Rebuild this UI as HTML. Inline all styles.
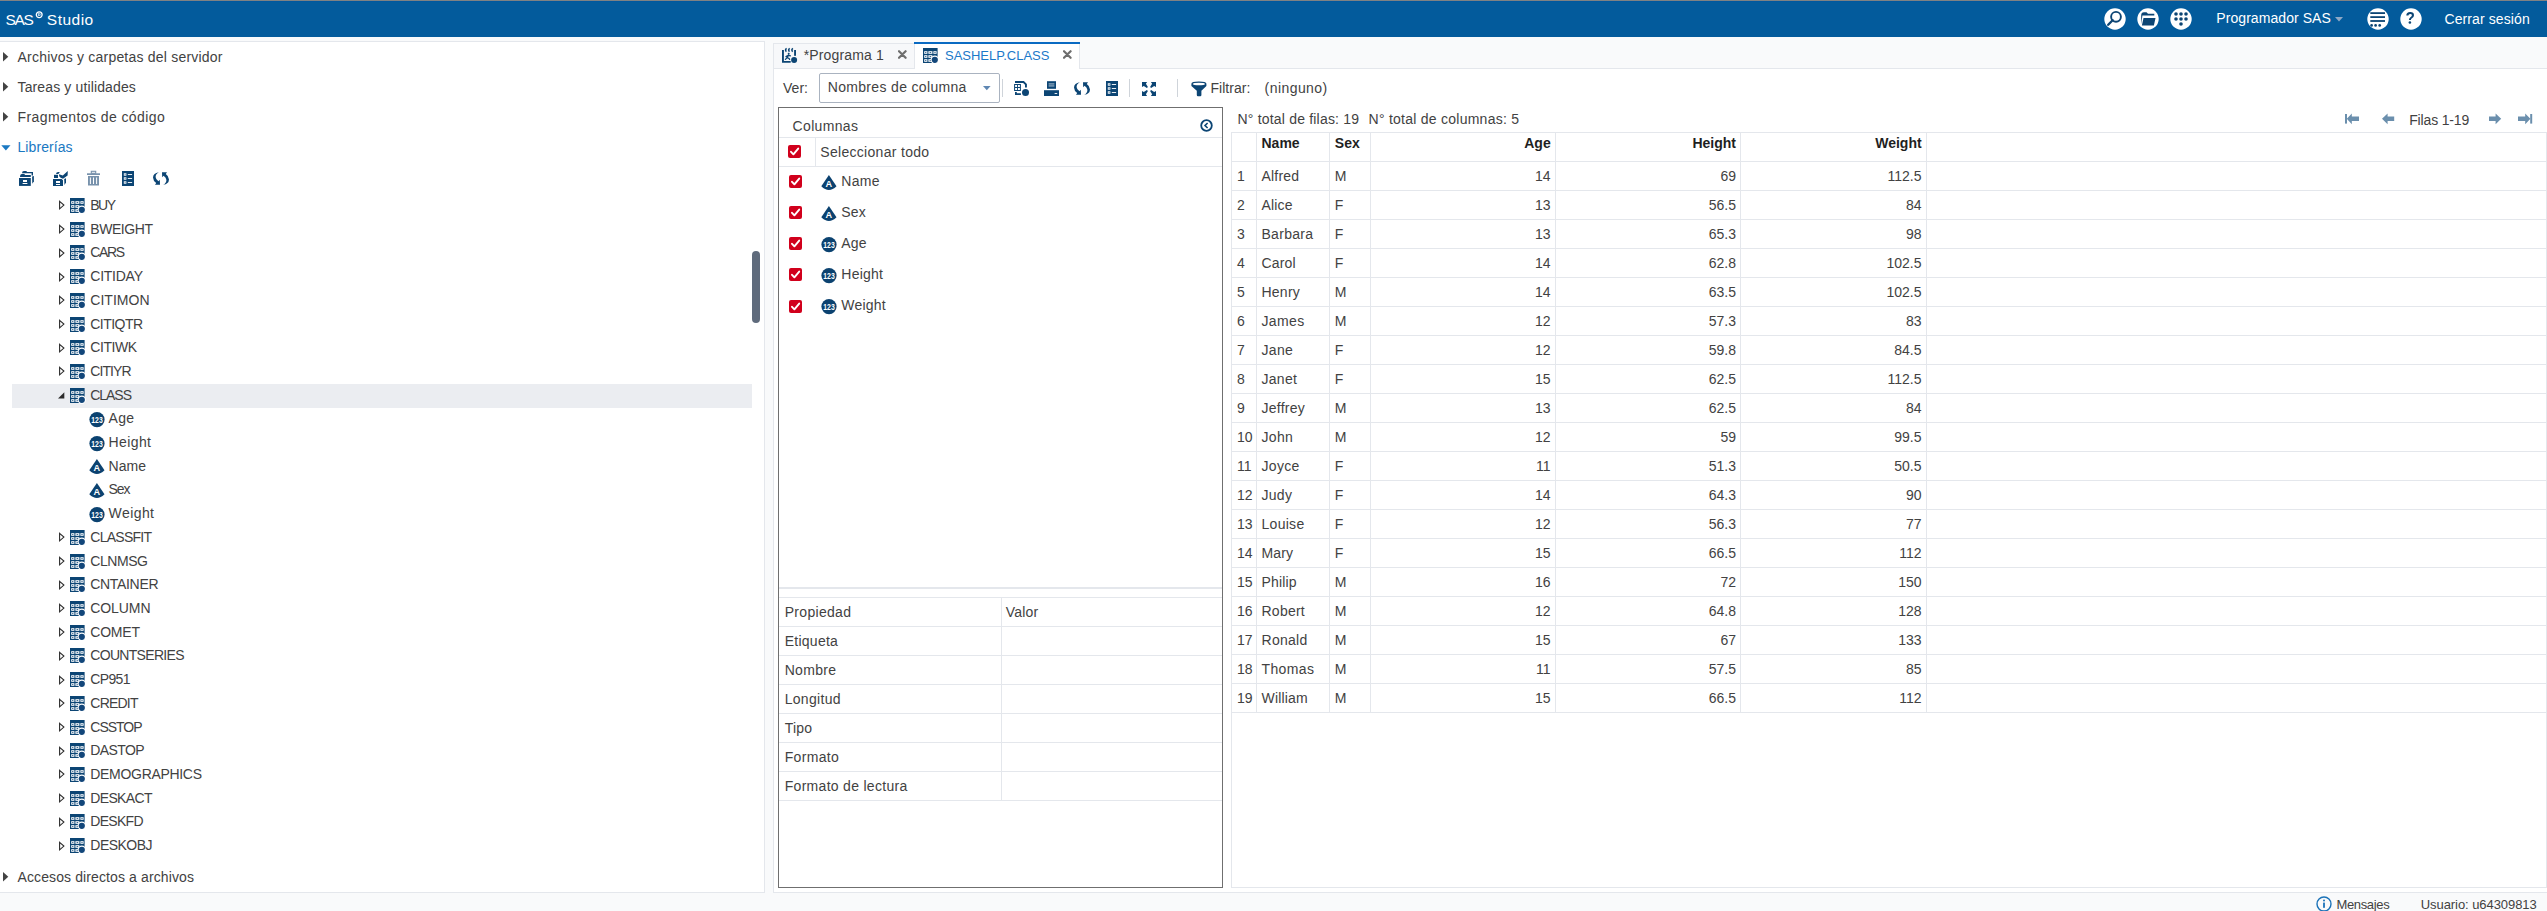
<!DOCTYPE html><html><head><meta charset="utf-8"><style>
html,body{margin:0;padding:0}
body{width:2547px;height:911px;overflow:hidden;background:#f9fafb;position:relative;font-family:"Liberation Sans",sans-serif}
.t{position:absolute;white-space:nowrap;line-height:20px}
.b{position:absolute}
</style></head><body><div class="b" style="left:0px;top:0px;width:2547px;height:1px;background:#808283"></div>
<div class="b" style="left:0px;top:1px;width:2547px;height:36px;background:#035b9c"></div>
<div class="b" style="left:0px;top:1px;width:2547px;height:1px;background:#0058a0"></div>
<div class="t" style="left:5.60px;top:9.63px;font-size:15.5px;color:#fff;letter-spacing:-1.357px;">SAS</div>
<svg class="b" style="left:34.5px;top:10.5px" width="9" height="8" viewBox="0 0 9 8"><circle cx="4.2" cy="3.8" r="2.9" fill="none" stroke="#fff" stroke-width="1.3"/><path d="M3.4 5.3 V2.4 H4.6 Q5.4 2.4 5.4 3.2 Q5.4 4 4.6 4 H3.4 M4.5 4 L5.4 5.3" fill="none" stroke="#fff" stroke-width="0.7"/></svg>
<div class="t" style="left:46.80px;top:9.63px;font-size:15.5px;color:#fff;letter-spacing:0.490px;">Studio</div>
<svg class="b" style="left:2104px;top:8px" width="22" height="22" viewBox="0 0 22 22"><circle cx="11" cy="11" r="10.7" fill="#fff"/><circle cx="12" cy="8.8" r="4.9" fill="none" stroke="#0c4574" stroke-width="1.9"/><path d="M8.6 12.2 L4.2 16.8" stroke="#0c4574" stroke-width="2.3" stroke-linecap="round"/></svg>
<svg class="b" style="left:2137px;top:8px" width="22" height="22" viewBox="0 0 22 22"><circle cx="11" cy="11" r="10.7" fill="#fff"/><path d="M4.2 16.3 V7.2 Q4.2 4.2 7 4.2 H9.5 L11 5.7 H17.3 V7.6 H5.4 Z" fill="#0c4574"/><path d="M6.5 9.9 H18.5 L16.9 17.4 H4.9 Z" fill="#0c4574"/></svg>
<svg class="b" style="left:2170px;top:8px" width="22" height="22" viewBox="0 0 22 22"><circle cx="11" cy="11" r="10.7" fill="#fff"/><circle cx="6" cy="6" r="1.8" fill="#0c4574"/><circle cx="11" cy="6" r="1.8" fill="#0c4574"/><circle cx="16" cy="6" r="1.8" fill="#0c4574"/><circle cx="6" cy="11" r="1.8" fill="#0c4574"/><circle cx="11" cy="11" r="1.8" fill="#0c4574"/><circle cx="16" cy="11" r="1.8" fill="#0c4574"/><circle cx="11" cy="16" r="1.8" fill="#0c4574"/></svg>
<div class="t" style="left:2216.30px;top:8.25px;font-size:14px;color:#fff;letter-spacing:0.064px;">Programador SAS</div>
<svg class="b" style="left:2335px;top:17px" width="8" height="5" viewBox="0 0 8 5"><path d="M0 0 H8 L4 4.5 Z" fill="#8fa9c6"/></svg>
<svg class="b" style="left:2366.5px;top:8px" width="22" height="22" viewBox="0 0 22 22"><circle cx="11" cy="11" r="10.7" fill="#fff"/><rect x="3.3" y="4.2" width="14.7" height="1.8" fill="#0c4574"/><rect x="3.3" y="8.2" width="14.7" height="1.8" fill="#0c4574"/><rect x="3.3" y="12.1" width="14.7" height="1.8" fill="#0c4574"/><circle cx="4.6" cy="17.4" r="1.35" fill="#0c4574"/><circle cx="8.6" cy="17.4" r="1.35" fill="#0c4574"/><circle cx="12.7" cy="17.4" r="1.35" fill="#0c4574"/></svg>
<svg class="b" style="left:2399.5px;top:8px" width="22" height="22" viewBox="0 0 22 22"><circle cx="11" cy="11" r="10.7" fill="#fff"/><path d="M6.3 7.6 Q6.3 4.1 10.2 4.1 Q14 4.1 14 7.2 Q14 9 12 10.2 Q10.9 10.9 10.9 12 H8.9 Q8.9 10.2 10.4 9.3 Q11.9 8.4 11.9 7.3 Q11.9 5.9 10.2 5.9 Q8.4 5.9 8.4 7.6 Z" fill="#0c4574"/><circle cx="9.9" cy="14.5" r="1.3" fill="#0c4574"/></svg>
<div class="t" style="left:2444.50px;top:8.95px;font-size:14px;color:#fff;letter-spacing:0.098px;">Cerrar sesi&oacute;n</div>
<div class="b" style="left:0px;top:41px;width:765px;height:852px;background:#fff;border-top:1px solid #e4e7ec;border-right:1px solid #e4e7ec;border-bottom:1px solid #e4e7ec;box-sizing:border-box"></div>
<div class="b" style="left:773px;top:68px;width:1774px;height:825px;background:#fff;border-left:1px solid #e4e7ec;border-top:1px solid #e4e7ec;border-bottom:1px solid #e4e7ec;box-sizing:border-box"></div>
<svg width="0" height="0" style="position:absolute"><defs>
<symbol id="tbl" viewBox="0 0 16 16">
 <rect x="0" y="0" width="14.6" height="15" fill="#0c4574"/>
 <g fill="#fff">
  <rect x="1.2" y="3.2" width="3.2" height="2.6"/><rect x="5.4" y="3.2" width="4" height="2.6"/><rect x="10.4" y="3.2" width="3.2" height="2.6"/>
  <rect x="1.2" y="7.2" width="3.2" height="2.6"/><rect x="5.4" y="7.2" width="4" height="2.6"/>
  <rect x="1.2" y="11.2" width="3.2" height="2.6"/><rect x="5.4" y="11.2" width="4" height="2.6"/>
 </g>
 <g fill="#0c4574"><rect x="2.3" y="4" width="1" height="1"/><rect x="6.6" y="4.1" width="1.6" height="0.8"/><rect x="11.5" y="4" width="1" height="1"/>
 <rect x="2.3" y="8" width="1" height="1"/><rect x="6.6" y="8.1" width="1.6" height="0.8"/><rect x="2.3" y="12" width="1" height="1"/><rect x="6.6" y="12.1" width="1.6" height="0.8"/></g>
 <circle cx="11.8" cy="11.8" r="4.2" fill="#fff"/>
 <circle cx="11.8" cy="11.8" r="3.1" fill="#12467a"/>
</symbol>
<symbol id="num" viewBox="0 0 16 16">
 <circle cx="8" cy="7.6" r="7.6" fill="#0b4270"/>
 <text x="2.3" y="11.3" textLength="11.4" lengthAdjust="spacingAndGlyphs" font-family="Liberation Sans" font-weight="bold" font-size="9.8" fill="#fff">123</text>
</symbol>
<symbol id="chr" viewBox="0 0 16 16">
 <path d="M7.9 0 L15.5 11.3 Q7.9 18.8 0.3 11.3 Z" fill="#0b4270"/>
 <text x="7.9" y="12.1" text-anchor="middle" font-family="Liberation Sans" font-weight="bold" font-size="9.2" fill="#fff">A</text>
</symbol>
<symbol id="arrO" viewBox="0 0 6 10">
 <path d="M0.6 1.3 L4.9 5.05 L0.6 8.8 Z" fill="none" stroke="#2b2b2b" stroke-width="1.1" stroke-linejoin="miter"/>
</symbol>
<symbol id="chk" viewBox="0 0 13 13">
 <rect x="0" y="0" width="13" height="13" rx="2" fill="#d1001c"/>
 <path d="M3 6.8 L5.4 9.3 L10.2 3.6" fill="none" stroke="#fff" stroke-width="1.9" stroke-linecap="round" stroke-linejoin="round"/>
</symbol>
<symbol id="refresh" viewBox="0 0 22 22">
 <path d="M8.8 4.2 Q3.2 5 3 9.5 Q3.2 13 6.2 15 L5 16.7 L10 16.7 L9.8 11.8 L8.4 13.2 Q5.8 11.5 5.6 9 Q5.6 5.8 8.8 4.2 Z" fill="#0c4574"/>
 <path d="M13.2 16.8 Q18.8 16 19 11.5 Q18.8 8 15.8 6 L17 4.3 L12 4.3 L12.2 9.2 L13.6 7.8 Q16.2 9.5 16.4 12 Q16.4 15.2 13.2 16.8 Z" fill="#0c4574"/>
</symbol>
<symbol id="list" viewBox="0 0 12 15">
 <rect x="0" y="0" width="12" height="15" fill="#0c4574"/>
 <g fill="#fff"><rect x="1.8" y="2.3" width="2.6" height="2.4"/><rect x="1.8" y="6.3" width="2.6" height="2.4"/><rect x="1.8" y="10.3" width="2.6" height="2.4"/>
 <rect x="5.8" y="3.1" width="4.3" height="0.9"/><rect x="5.8" y="7.1" width="4.3" height="0.9"/><rect x="5.8" y="11.1" width="4.3" height="0.9"/></g>
 <g fill="#0c4574"><rect x="2.7" y="3.1" width="0.8" height="0.8"/><rect x="2.7" y="7.1" width="0.8" height="0.8"/><rect x="2.7" y="11.1" width="0.8" height="0.8"/></g>
</symbol>
</defs></svg>
<svg class="b" style="left:3px;top:52.2px" width="6" height="10" viewBox="0 0 6 10"><path d="M0 0 L5.3 4.7 L0 9.4 Z" fill="#444"/></svg>
<div class="t" style="left:17.50px;top:46.85px;font-size:14px;color:#424242;letter-spacing:0.212px;">Archivos y carpetas del servidor</div>
<svg class="b" style="left:3px;top:82.2px" width="6" height="10" viewBox="0 0 6 10"><path d="M0 0 L5.3 4.7 L0 9.4 Z" fill="#444"/></svg>
<div class="t" style="left:17.50px;top:76.85px;font-size:14px;color:#424242;letter-spacing:0.131px;">Tareas y utilidades</div>
<svg class="b" style="left:3px;top:112.2px" width="6" height="10" viewBox="0 0 6 10"><path d="M0 0 L5.3 4.7 L0 9.4 Z" fill="#444"/></svg>
<div class="t" style="left:17.50px;top:106.85px;font-size:14px;color:#424242;letter-spacing:0.421px;">Fragmentos de c&oacute;digo</div>
<svg class="b" style="left:1px;top:144.5px" width="10" height="6" viewBox="0 0 10 6"><path d="M0.3 0.2 H9.5 L4.9 5.5 Z" fill="#1a78c2"/></svg>
<div class="t" style="left:17.50px;top:136.85px;font-size:14px;color:#1a78c2;letter-spacing:0.079px;">Librer&iacute;as</div>
<svg class="b" style="left:16px;top:168px" width="22" height="22" viewBox="0 0 22 22"><g fill="#0c4574">
<path d="M6 5.3 Q6 3 8 3 H10.3 L11.1 3.9 H17 V7.6 H15.6 V5.3 Z"/>
<path d="M4 8.9 Q4 6 6 6 H8.3 L9.1 6.9 H14.8 V8.9 Z"/>
<path d="M16.1 8.4 L17.9 8 V13.2 L16.3 15.8 Z"/>
<rect x="3" y="10" width="11.8" height="7.9"/></g>
<rect x="7" y="12" width="4" height="2" fill="#fff"/><rect x="6.6" y="15" width="4.8" height="1" fill="#fff"/></svg>
<svg class="b" style="left:50px;top:168px" width="22" height="22" viewBox="0 0 22 22"><g fill="#0c4574">
<path d="M6 6 Q6.2 4 8.2 4 H9.8 L8.4 6 Z"/>
<rect x="4" y="6.8" width="4" height="3.2"/>
<path d="M9 6.2 L12.8 7.6 L17.8 3 L17.6 7.6 L13 10.8 Q10.2 9.8 9.2 8.2 Z"/>
<path d="M14.2 10.9 L16 10.3 V14.6 L14.5 16.9 Z"/>
<path d="M3 11 H11.6 L13 12.2 V18 H3 Z"/></g>
<rect x="6" y="13" width="4" height="2" fill="#fff"/><rect x="6" y="16" width="4" height="1" fill="#fff"/></svg>
<svg class="b" style="left:87px;top:170px" width="13" height="16" viewBox="0 0 13 16"><rect x="4.3" y="1.3" width="4.4" height="2" fill="none" stroke="#7892ac" stroke-width="1.1"/>
<rect x="0" y="3.3" width="13" height="1.7" fill="#7892ac"/>
<path d="M1 6 H12 V15.6 H1 Z M2.9 7.4 V14 H3.9 V7.4 Z M6 7.4 V14 H7 V7.4 Z M9.1 7.4 V14 H10.1 V7.4 Z" fill="#7892ac" fill-rule="evenodd"/></svg>
<svg class="b" style="left:122px;top:171px" width="12" height="15"><use href="#list" width="12" height="15"/></svg>
<svg class="b" style="left:150px;top:168px" width="22" height="22"><use href="#refresh" width="22" height="22"/></svg>
<svg class="b" style="left:58.6px;top:200.4px" width="6" height="10"><use href="#arrO" width="6" height="10"/></svg>
<svg class="b" style="left:70px;top:198.0px" width="16" height="16"><use href="#tbl" width="16" height="16"/></svg>
<div class="t" style="left:90.30px;top:194.95px;font-size:14px;color:#424242;letter-spacing:-1.543px;">BUY</div>
<svg class="b" style="left:58.6px;top:224.11px" width="6" height="10"><use href="#arrO" width="6" height="10"/></svg>
<svg class="b" style="left:70px;top:221.71px" width="16" height="16"><use href="#tbl" width="16" height="16"/></svg>
<div class="t" style="left:90.30px;top:218.66px;font-size:14px;color:#424242;letter-spacing:-0.439px;">BWEIGHT</div>
<svg class="b" style="left:58.6px;top:247.82000000000002px" width="6" height="10"><use href="#arrO" width="6" height="10"/></svg>
<svg class="b" style="left:70px;top:245.42000000000002px" width="16" height="16"><use href="#tbl" width="16" height="16"/></svg>
<div class="t" style="left:90.30px;top:242.37px;font-size:14px;color:#424242;letter-spacing:-1.399px;">CARS</div>
<svg class="b" style="left:58.6px;top:271.53000000000003px" width="6" height="10"><use href="#arrO" width="6" height="10"/></svg>
<svg class="b" style="left:70px;top:269.13px" width="16" height="16"><use href="#tbl" width="16" height="16"/></svg>
<div class="t" style="left:90.30px;top:266.08px;font-size:14px;color:#424242;letter-spacing:-0.248px;">CITIDAY</div>
<svg class="b" style="left:58.6px;top:295.24px" width="6" height="10"><use href="#arrO" width="6" height="10"/></svg>
<svg class="b" style="left:70px;top:292.84px" width="16" height="16"><use href="#tbl" width="16" height="16"/></svg>
<div class="t" style="left:90.30px;top:289.79px;font-size:14px;color:#424242;letter-spacing:0.016px;">CITIMON</div>
<svg class="b" style="left:58.6px;top:318.95000000000005px" width="6" height="10"><use href="#arrO" width="6" height="10"/></svg>
<svg class="b" style="left:70px;top:316.55px" width="16" height="16"><use href="#tbl" width="16" height="16"/></svg>
<div class="t" style="left:90.30px;top:313.50px;font-size:14px;color:#424242;letter-spacing:-0.549px;">CITIQTR</div>
<svg class="b" style="left:58.6px;top:342.66px" width="6" height="10"><use href="#arrO" width="6" height="10"/></svg>
<svg class="b" style="left:70px;top:340.26px" width="16" height="16"><use href="#tbl" width="16" height="16"/></svg>
<div class="t" style="left:90.30px;top:337.21px;font-size:14px;color:#424242;letter-spacing:-0.459px;">CITIWK</div>
<svg class="b" style="left:58.6px;top:366.37px" width="6" height="10"><use href="#arrO" width="6" height="10"/></svg>
<svg class="b" style="left:70px;top:363.96999999999997px" width="16" height="16"><use href="#tbl" width="16" height="16"/></svg>
<div class="t" style="left:90.30px;top:360.92px;font-size:14px;color:#424242;letter-spacing:-0.938px;">CITIYR</div>
<div class="b" style="left:12px;top:383.88px;width:740px;height:24px;background:#ebedf1"></div>
<svg class="b" style="left:58px;top:391.88px" width="7" height="7" viewBox="0 0 7 7"><path d="M6.3 0.2 V6.4 H0 Z" fill="#2b2b2b"/></svg>
<svg class="b" style="left:70px;top:387.68px" width="16" height="16"><use href="#tbl" width="16" height="16"/></svg>
<div class="t" style="left:90.30px;top:384.63px;font-size:14px;color:#424242;letter-spacing:-1.053px;">CLASS</div>
<svg class="b" style="left:88.6px;top:411.89000000000004px" width="16" height="16"><use href="#num" width="16" height="16"/></svg>
<div class="t" style="left:108.60px;top:408.34px;font-size:14px;color:#424242;letter-spacing:0.245px;">Age</div>
<svg class="b" style="left:88.6px;top:435.6px" width="16" height="16"><use href="#num" width="16" height="16"/></svg>
<div class="t" style="left:108.60px;top:432.05px;font-size:14px;color:#424242;letter-spacing:0.386px;">Height</div>
<svg class="b" style="left:88.6px;top:459.31px" width="16" height="16"><use href="#chr" width="16" height="16"/></svg>
<div class="t" style="left:108.60px;top:455.76px;font-size:14px;color:#424242;letter-spacing:0.018px;">Name</div>
<svg class="b" style="left:88.6px;top:483.02px" width="16" height="16"><use href="#chr" width="16" height="16"/></svg>
<div class="t" style="left:108.60px;top:479.47px;font-size:14px;color:#424242;letter-spacing:-1.112px;">Sex</div>
<svg class="b" style="left:88.6px;top:506.72999999999996px" width="16" height="16"><use href="#num" width="16" height="16"/></svg>
<div class="t" style="left:108.60px;top:503.18px;font-size:14px;color:#424242;letter-spacing:0.416px;">Weight</div>
<svg class="b" style="left:58.6px;top:532.34px" width="6" height="10"><use href="#arrO" width="6" height="10"/></svg>
<svg class="b" style="left:70px;top:529.94px" width="16" height="16"><use href="#tbl" width="16" height="16"/></svg>
<div class="t" style="left:90.30px;top:526.89px;font-size:14px;color:#424242;letter-spacing:-0.743px;">CLASSFIT</div>
<svg class="b" style="left:58.6px;top:556.0500000000001px" width="6" height="10"><use href="#arrO" width="6" height="10"/></svg>
<svg class="b" style="left:70px;top:553.6500000000001px" width="16" height="16"><use href="#tbl" width="16" height="16"/></svg>
<div class="t" style="left:90.30px;top:550.60px;font-size:14px;color:#424242;letter-spacing:-0.439px;">CLNMSG</div>
<svg class="b" style="left:58.6px;top:579.7600000000001px" width="6" height="10"><use href="#arrO" width="6" height="10"/></svg>
<svg class="b" style="left:70px;top:577.3600000000001px" width="16" height="16"><use href="#tbl" width="16" height="16"/></svg>
<div class="t" style="left:90.30px;top:574.31px;font-size:14px;color:#424242;letter-spacing:-0.331px;">CNTAINER</div>
<svg class="b" style="left:58.6px;top:603.47px" width="6" height="10"><use href="#arrO" width="6" height="10"/></svg>
<svg class="b" style="left:70px;top:601.07px" width="16" height="16"><use href="#tbl" width="16" height="16"/></svg>
<div class="t" style="left:90.30px;top:598.02px;font-size:14px;color:#424242;letter-spacing:-0.094px;">COLUMN</div>
<svg class="b" style="left:58.6px;top:627.1800000000001px" width="6" height="10"><use href="#arrO" width="6" height="10"/></svg>
<svg class="b" style="left:70px;top:624.7800000000001px" width="16" height="16"><use href="#tbl" width="16" height="16"/></svg>
<div class="t" style="left:90.30px;top:621.73px;font-size:14px;color:#424242;letter-spacing:-0.213px;">COMET</div>
<svg class="b" style="left:58.6px;top:650.89px" width="6" height="10"><use href="#arrO" width="6" height="10"/></svg>
<svg class="b" style="left:70px;top:648.49px" width="16" height="16"><use href="#tbl" width="16" height="16"/></svg>
<div class="t" style="left:90.30px;top:645.44px;font-size:14px;color:#424242;letter-spacing:-0.692px;">COUNTSERIES</div>
<svg class="b" style="left:58.6px;top:674.6px" width="6" height="10"><use href="#arrO" width="6" height="10"/></svg>
<svg class="b" style="left:70px;top:672.2px" width="16" height="16"><use href="#tbl" width="16" height="16"/></svg>
<div class="t" style="left:90.30px;top:669.15px;font-size:14px;color:#424242;letter-spacing:-0.652px;">CP951</div>
<svg class="b" style="left:58.6px;top:698.3100000000001px" width="6" height="10"><use href="#arrO" width="6" height="10"/></svg>
<svg class="b" style="left:70px;top:695.9100000000001px" width="16" height="16"><use href="#tbl" width="16" height="16"/></svg>
<div class="t" style="left:90.30px;top:692.86px;font-size:14px;color:#424242;letter-spacing:-0.782px;">CREDIT</div>
<svg class="b" style="left:58.6px;top:722.0200000000001px" width="6" height="10"><use href="#arrO" width="6" height="10"/></svg>
<svg class="b" style="left:70px;top:719.6200000000001px" width="16" height="16"><use href="#tbl" width="16" height="16"/></svg>
<div class="t" style="left:90.30px;top:716.57px;font-size:14px;color:#424242;letter-spacing:-1.023px;">CSSTOP</div>
<svg class="b" style="left:58.6px;top:745.7300000000001px" width="6" height="10"><use href="#arrO" width="6" height="10"/></svg>
<svg class="b" style="left:70px;top:743.3300000000002px" width="16" height="16"><use href="#tbl" width="16" height="16"/></svg>
<div class="t" style="left:90.30px;top:740.28px;font-size:14px;color:#424242;letter-spacing:-0.623px;">DASTOP</div>
<svg class="b" style="left:58.6px;top:769.4399999999999px" width="6" height="10"><use href="#arrO" width="6" height="10"/></svg>
<svg class="b" style="left:70px;top:767.04px" width="16" height="16"><use href="#tbl" width="16" height="16"/></svg>
<div class="t" style="left:90.30px;top:763.99px;font-size:14px;color:#424242;letter-spacing:-0.311px;">DEMOGRAPHICS</div>
<svg class="b" style="left:58.6px;top:793.15px" width="6" height="10"><use href="#arrO" width="6" height="10"/></svg>
<svg class="b" style="left:70px;top:790.75px" width="16" height="16"><use href="#tbl" width="16" height="16"/></svg>
<div class="t" style="left:90.30px;top:787.70px;font-size:14px;color:#424242;letter-spacing:-0.654px;">DESKACT</div>
<svg class="b" style="left:58.6px;top:816.86px" width="6" height="10"><use href="#arrO" width="6" height="10"/></svg>
<svg class="b" style="left:70px;top:814.46px" width="16" height="16"><use href="#tbl" width="16" height="16"/></svg>
<div class="t" style="left:90.30px;top:811.41px;font-size:14px;color:#424242;letter-spacing:-0.717px;">DESKFD</div>
<svg class="b" style="left:58.6px;top:840.57px" width="6" height="10"><use href="#arrO" width="6" height="10"/></svg>
<svg class="b" style="left:70px;top:838.1700000000001px" width="16" height="16"><use href="#tbl" width="16" height="16"/></svg>
<div class="t" style="left:90.30px;top:835.12px;font-size:14px;color:#424242;letter-spacing:-0.526px;">DESKOBJ</div>
<svg class="b" style="left:3px;top:872.0px" width="6" height="10" viewBox="0 0 6 10"><path d="M0 0 L5.3 4.7 L0 9.4 Z" fill="#444"/></svg>
<div class="t" style="left:17.50px;top:866.65px;font-size:14px;color:#424242;letter-spacing:0.111px;">Accesos directos a archivos</div>
<div class="b" style="left:752px;top:251px;width:8px;height:72px;background:#5f6b7c;border-radius:4px"></div>
<div class="b" style="left:773px;top:43px;width:142px;height:25px;background:#f7f8fa;border:1px solid #e4e7ec;border-bottom:none;box-sizing:border-box"></div>
<div class="b" style="left:914px;top:42px;width:166px;height:27px;background:#fff;border-left:1px solid #e4e7ec;border-right:1px solid #e4e7ec;box-sizing:border-box"></div>
<div class="b" style="left:914px;top:42px;width:166px;height:2px;background:#0a6ac2"></div>
<svg class="b" style="left:778px;top:44px" width="24" height="22" viewBox="0 0 24 22"><g fill="#0c4574"><path d="M4 6 H5.9 V17.1 H12.7 V18.8 H4 Z"/><rect x="16.1" y="6" width="1.9" height="5.8"/>
<circle cx="16.1" cy="15.9" r="3"/><circle cx="10.7" cy="9.8" r="1"/></g>
<g fill="none" stroke="#0c4574" stroke-width="1.5"><path d="M8.6 4.3 Q6.6 5.8 8.4 7.6 M11.7 4.3 Q9.7 5.8 11.5 7.6 M14.9 4.3 Q12.9 5.8 14.7 7.6"/></g>
<g fill="none" stroke="#0c4574" stroke-width="1.3" stroke-linecap="round"><path d="M10.5 11 L9.2 13.6 L7.4 15.4 M9.2 13.6 L11 14.4 L11.6 15.4 M10.3 11.4 L8 12.6 M10.4 11.3 L12.4 11.9"/></g></svg>
<div class="t" style="left:803.70px;top:45.15px;font-size:14px;color:#424242;letter-spacing:0.141px;">*Programa 1</div>
<svg class="b" style="left:897.5px;top:49.5px" width="9" height="9" viewBox="0 0 9 9"><path d="M1 1.2 L7.6 7.8 M7.6 1.2 L1 7.8" stroke="#6e6e6e" stroke-width="2.2" stroke-linecap="round"/></svg>
<svg class="b" style="left:923px;top:48px" width="16" height="16"><use href="#tbl" width="16" height="16"/></svg>
<div class="t" style="left:945.00px;top:45.50px;font-size:13px;color:#1b79c9;letter-spacing:-0.012px;">SASHELP.CLASS</div>
<svg class="b" style="left:1062.5px;top:49.5px" width="9" height="9" viewBox="0 0 9 9"><path d="M1 1.2 L7.6 7.8 M7.6 1.2 L1 7.8" stroke="#6e6e6e" stroke-width="2.2" stroke-linecap="round"/></svg>
<div class="t" style="left:783.00px;top:77.65px;font-size:14px;color:#424242;letter-spacing:0.032px;">Ver:</div>
<div class="b" style="left:819px;top:73px;width:181px;height:30px;border:1px solid #aab3c0;border-radius:2px;box-sizing:border-box;background:#fff"></div>
<div class="t" style="left:827.70px;top:77.15px;font-size:14px;color:#424242;letter-spacing:0.332px;">Nombres de columna</div>
<svg class="b" style="left:982.5px;top:85.8px" width="8" height="5" viewBox="0 0 8 5"><path d="M0 0 H7.6 L3.8 4.2 Z" fill="#5f87b3"/></svg>
<div class="b" style="left:1002px;top:79px;width:1px;height:18px;background:#cfd4da"></div>
<div class="b" style="left:1129px;top:79px;width:1px;height:18px;background:#cfd4da"></div>
<div class="b" style="left:1177px;top:79px;width:1px;height:18px;background:#cfd4da"></div>
<svg class="b" style="left:1010px;top:77px" width="24" height="22" viewBox="0 0 24 22"><g fill="#0c4574"><path d="M5 4 H13.9 L16.9 7 V10.6 H15 V7.8 L13.1 5.9 H5 Z"/>
<path d="M4.1 7 H10.9 V13.9 H4.1 Z M5.1 8 V10 H7 V8 Z M7.9 8 V10 H9.9 V8 Z M5.1 11 V13 H7 V11 Z M7.9 11 V13 H9.9 V11 Z" fill-rule="evenodd"/>
<path d="M5 15.1 H6.8 V16.3 H10.9 V17.9 H5 Z"/><circle cx="15.5" cy="15.5" r="3.5"/></g></svg>
<svg class="b" style="left:1044px;top:81px" width="16" height="16" viewBox="0 0 16 16"><rect x="3" y="0.2" width="9" height="7.6" fill="#0c4574"/><rect x="4.6" y="2.6" width="5.8" height="0.7" fill="#fff"/><rect x="4.6" y="4.6" width="5.8" height="0.7" fill="#fff"/>
<rect x="0" y="9.2" width="15" height="5.8" fill="#0c4574"/><rect x="10.6" y="12" width="2.6" height="0.9" fill="#fff"/></svg>
<svg class="b" style="left:1071px;top:78.2px" width="22" height="22"><use href="#refresh" width="22" height="22"/></svg>
<svg class="b" style="left:1106px;top:81px" width="12" height="15"><use href="#list" width="12" height="15"/></svg>
<svg class="b" style="left:1138px;top:78px" width="22" height="22" viewBox="0 0 22 22"><g fill="#0c4574"><path d="M4 4 H9.1 L7.9 5.8 L9.9 8.9 L8.9 9.9 L5.8 7.9 L4 9.1 Z"/><g transform="matrix(-1 0 0 1 22 0)"><path d="M4 4 H9.1 L7.9 5.8 L9.9 8.9 L8.9 9.9 L5.8 7.9 L4 9.1 Z"/></g><g transform="matrix(1 0 0 -1 0 22)"><path d="M4 4 H9.1 L7.9 5.8 L9.9 8.9 L8.9 9.9 L5.8 7.9 L4 9.1 Z"/></g><g transform="matrix(-1 0 0 -1 22 22)"><path d="M4 4 H9.1 L7.9 5.8 L9.9 8.9 L8.9 9.9 L5.8 7.9 L4 9.1 Z"/></g></g></svg>
<svg class="b" style="left:1190.5px;top:80.5px" width="16" height="16" viewBox="0 0 16 16"><path d="M0.4 2.8 Q0.4 0.4 7.9 0.4 Q15.4 0.4 15.4 2.8 V5 L10.4 9.8 V14 Q10.4 15.2 9.2 15.2 H7 Q5.8 15.2 5.8 14 V9.8 L0.4 5 Z" fill="#0c4574"/>
<ellipse cx="7.9" cy="3.0" rx="6.2" ry="1.25" fill="#fff"/></svg>
<div class="t" style="left:1210.50px;top:77.95px;font-size:14px;color:#424242;letter-spacing:0.020px;">Filtrar:</div>
<div class="t" style="left:1264.60px;top:77.95px;font-size:14px;color:#424242;letter-spacing:0.431px;">(ninguno)</div>
<div class="b" style="left:778px;top:107px;width:445px;height:781px;border:1px solid #6f6f6f;box-sizing:border-box;background:#fff"></div>
<div class="t" style="left:792.60px;top:116.05px;font-size:14px;color:#424242;letter-spacing:0.336px;">Columnas</div>
<svg class="b" style="left:1199.5px;top:118.5px" width="13" height="13" viewBox="0 0 13 13"><circle cx="6.5" cy="6.5" r="5.3" fill="none" stroke="#0c4574" stroke-width="1.8"/><path d="M7.6 4 L5 6.5 L7.6 9" fill="none" stroke="#0c4574" stroke-width="1.6"/></svg>
<div class="b" style="left:779px;top:137px;width:443px;height:1px;background:#e4e7ec"></div>
<svg class="b" style="left:788px;top:145px" width="13" height="13"><use href="#chk" width="13" height="13"/></svg>
<div class="b" style="left:815px;top:138px;width:1px;height:28px;background:#e4e7ec"></div>
<div class="t" style="left:820.30px;top:141.85px;font-size:14px;color:#424242;letter-spacing:0.300px;">Seleccionar todo</div>
<div class="b" style="left:779px;top:166px;width:443px;height:1px;background:#e4e7ec"></div>
<svg class="b" style="left:789px;top:175.3px" width="13" height="13"><use href="#chk" width="13" height="13"/></svg>
<svg class="b" style="left:820.9px;top:174.8px" width="16" height="16"><use href="#chr" width="16" height="16"/></svg>
<div class="t" style="left:841.30px;top:171.05px;font-size:14px;color:#424242;letter-spacing:0.314px;">Name</div>
<svg class="b" style="left:789px;top:206.35000000000002px" width="13" height="13"><use href="#chk" width="13" height="13"/></svg>
<svg class="b" style="left:820.9px;top:205.85000000000002px" width="16" height="16"><use href="#chr" width="16" height="16"/></svg>
<div class="t" style="left:841.30px;top:202.10px;font-size:14px;color:#424242;letter-spacing:0.150px;">Sex</div>
<svg class="b" style="left:789px;top:237.4px" width="13" height="13"><use href="#chk" width="13" height="13"/></svg>
<svg class="b" style="left:820.7px;top:236.9px" width="16" height="16"><use href="#num" width="16" height="16"/></svg>
<div class="t" style="left:841.30px;top:233.15px;font-size:14px;color:#424242;letter-spacing:0.171px;">Age</div>
<svg class="b" style="left:789px;top:268.45px" width="13" height="13"><use href="#chk" width="13" height="13"/></svg>
<svg class="b" style="left:820.7px;top:267.95px" width="16" height="16"><use href="#num" width="16" height="16"/></svg>
<div class="t" style="left:841.30px;top:264.20px;font-size:14px;color:#424242;letter-spacing:0.223px;">Height</div>
<svg class="b" style="left:789px;top:299.5px" width="13" height="13"><use href="#chk" width="13" height="13"/></svg>
<svg class="b" style="left:820.7px;top:299.0px" width="16" height="16"><use href="#num" width="16" height="16"/></svg>
<div class="t" style="left:841.30px;top:295.25px;font-size:14px;color:#424242;letter-spacing:0.187px;">Weight</div>
<div class="b" style="left:779px;top:587px;width:443px;height:2px;background:#e4e7ec"></div>
<div class="b" style="left:779px;top:597px;width:443px;height:1px;background:#e4e7ec"></div>
<div class="b" style="left:779px;top:626px;width:443px;height:1px;background:#e4e7ec"></div>
<div class="b" style="left:779px;top:655px;width:443px;height:1px;background:#e4e7ec"></div>
<div class="b" style="left:779px;top:684px;width:443px;height:1px;background:#e4e7ec"></div>
<div class="b" style="left:779px;top:713px;width:443px;height:1px;background:#e4e7ec"></div>
<div class="b" style="left:779px;top:742px;width:443px;height:1px;background:#e4e7ec"></div>
<div class="b" style="left:779px;top:771px;width:443px;height:1px;background:#e4e7ec"></div>
<div class="b" style="left:779px;top:800px;width:443px;height:1px;background:#e4e7ec"></div>
<div class="b" style="left:1001px;top:597px;width:1px;height:204px;background:#e4e7ec"></div>
<div class="t" style="left:784.70px;top:601.85px;font-size:14px;color:#424242;letter-spacing:0.310px;">Propiedad</div>
<div class="t" style="left:1005.70px;top:602.05px;font-size:14px;color:#424242;letter-spacing:0.186px;">Valor</div>
<div class="t" style="left:784.70px;top:630.95px;font-size:14px;color:#424242;letter-spacing:0.257px;">Etiqueta</div>
<div class="t" style="left:784.70px;top:659.97px;font-size:14px;color:#424242;letter-spacing:0.325px;">Nombre</div>
<div class="t" style="left:784.70px;top:688.99px;font-size:14px;color:#424242;letter-spacing:0.300px;">Longitud</div>
<div class="t" style="left:784.70px;top:718.01px;font-size:14px;color:#424242;letter-spacing:0.182px;">Tipo</div>
<div class="t" style="left:784.70px;top:747.03px;font-size:14px;color:#424242;letter-spacing:0.321px;">Formato</div>
<div class="t" style="left:784.70px;top:776.05px;font-size:14px;color:#424242;letter-spacing:0.300px;">Formato de lectura</div>
<div class="t" style="left:1237.50px;top:109.15px;font-size:14px;color:#424242;letter-spacing:0.192px;">N&deg; total de filas: 19</div>
<div class="t" style="left:1368.60px;top:109.15px;font-size:14px;color:#424242;letter-spacing:0.250px;">N&deg; total de columnas: 5</div>
<svg class="b" style="left:2345px;top:113.2px" width="15" height="13" viewBox="0 0 15 13"><rect x="0" y="1" width="2" height="9.6" fill="#6b8fad"/><path d="M1.8 5.8 L6.8 0.4 V3.6 H14 V8 H6.8 V11.2 Z" fill="#6b8fad"/></svg>
<svg class="b" style="left:2381.6px;top:113.2px" width="13" height="13" viewBox="0 0 13 13"><path d="M0 5.8 L5.6 0.4 V3.6 H12.2 V8 H5.6 V11.2 Z" fill="#6b8fad"/></svg>
<svg class="b" style="left:2489px;top:113.2px" width="13" height="13" viewBox="0 0 13 13"><path d="M12.2 5.8 L6.6 0.4 V3.6 H0 V8 H6.6 V11.2 Z" fill="#6b8fad"/></svg>
<svg class="b" style="left:2518px;top:113.2px" width="15" height="13" viewBox="0 0 15 13"><rect x="12.2" y="1" width="2" height="9.6" fill="#6b8fad"/><path d="M12.4 5.8 L7.2 0.4 V3.6 H0 V8 H7.2 V11.2 Z" fill="#6b8fad"/></svg>
<div class="t" style="left:2409.20px;top:110.15px;font-size:14px;color:#424242;letter-spacing:-0.152px;">Filas 1-19</div>
<div class="b" style="left:1231px;top:132px;width:1316px;height:756px;border:1px solid #e4e7ec;box-sizing:border-box;background:#fff"></div>
<div class="b" style="left:1256px;top:133px;width:1px;height:580px;background:#e4e7ec"></div>
<div class="b" style="left:1329px;top:133px;width:1px;height:580px;background:#e4e7ec"></div>
<div class="b" style="left:1370px;top:133px;width:1px;height:580px;background:#e4e7ec"></div>
<div class="b" style="left:1555px;top:133px;width:1px;height:580px;background:#e4e7ec"></div>
<div class="b" style="left:1740px;top:133px;width:1px;height:580px;background:#e4e7ec"></div>
<div class="b" style="left:1926px;top:133px;width:1px;height:580px;background:#e4e7ec"></div>
<div class="b" style="left:1232px;top:161px;width:1314px;height:1px;background:#e4e7ec"></div>
<div class="b" style="left:1232px;top:190px;width:1314px;height:1px;background:#e4e7ec"></div>
<div class="b" style="left:1232px;top:219px;width:1314px;height:1px;background:#e4e7ec"></div>
<div class="b" style="left:1232px;top:248px;width:1314px;height:1px;background:#e4e7ec"></div>
<div class="b" style="left:1232px;top:277px;width:1314px;height:1px;background:#e4e7ec"></div>
<div class="b" style="left:1232px;top:306px;width:1314px;height:1px;background:#e4e7ec"></div>
<div class="b" style="left:1232px;top:335px;width:1314px;height:1px;background:#e4e7ec"></div>
<div class="b" style="left:1232px;top:364px;width:1314px;height:1px;background:#e4e7ec"></div>
<div class="b" style="left:1232px;top:393px;width:1314px;height:1px;background:#e4e7ec"></div>
<div class="b" style="left:1232px;top:422px;width:1314px;height:1px;background:#e4e7ec"></div>
<div class="b" style="left:1232px;top:451px;width:1314px;height:1px;background:#e4e7ec"></div>
<div class="b" style="left:1232px;top:480px;width:1314px;height:1px;background:#e4e7ec"></div>
<div class="b" style="left:1232px;top:509px;width:1314px;height:1px;background:#e4e7ec"></div>
<div class="b" style="left:1232px;top:538px;width:1314px;height:1px;background:#e4e7ec"></div>
<div class="b" style="left:1232px;top:567px;width:1314px;height:1px;background:#e4e7ec"></div>
<div class="b" style="left:1232px;top:596px;width:1314px;height:1px;background:#e4e7ec"></div>
<div class="b" style="left:1232px;top:625px;width:1314px;height:1px;background:#e4e7ec"></div>
<div class="b" style="left:1232px;top:654px;width:1314px;height:1px;background:#e4e7ec"></div>
<div class="b" style="left:1232px;top:683px;width:1314px;height:1px;background:#e4e7ec"></div>
<div class="b" style="left:1232px;top:712px;width:1314px;height:1px;background:#e4e7ec"></div>
<div class="t" style="left:1261.50px;top:132.85px;font-size:14px;color:#1f1f1f;font-weight:bold;">Name</div>
<div class="t" style="left:1334.80px;top:132.85px;font-size:14px;color:#1f1f1f;font-weight:bold;">Sex</div>
<div class="t" style="left:1524.25px;top:132.85px;font-size:14px;color:#1f1f1f;font-weight:bold;">Age</div>
<div class="t" style="left:1692.45px;top:132.85px;font-size:14px;color:#1f1f1f;font-weight:bold;">Height</div>
<div class="t" style="left:1875.20px;top:132.85px;font-size:14px;color:#1f1f1f;font-weight:bold;">Weight</div>
<div class="t" style="left:1237.00px;top:165.95px;font-size:14px;color:#424242;">1</div>
<div class="t" style="left:1261.50px;top:165.95px;font-size:14px;color:#424242;letter-spacing:0.197px;">Alfred</div>
<div class="t" style="left:1334.80px;top:165.95px;font-size:14px;color:#424242;">M</div>
<div class="t" style="left:1534.93px;top:165.95px;font-size:14px;color:#424242;letter-spacing:0.000px;">14</div>
<div class="t" style="left:1720.43px;top:165.95px;font-size:14px;color:#424242;letter-spacing:0.000px;">69</div>
<div class="t" style="left:1887.51px;top:165.95px;font-size:14px;color:#424242;letter-spacing:0.000px;">112.5</div>
<div class="t" style="left:1237.00px;top:194.95px;font-size:14px;color:#424242;">2</div>
<div class="t" style="left:1261.50px;top:194.95px;font-size:14px;color:#424242;letter-spacing:0.160px;">Alice</div>
<div class="t" style="left:1334.80px;top:194.95px;font-size:14px;color:#424242;">F</div>
<div class="t" style="left:1534.93px;top:194.95px;font-size:14px;color:#424242;letter-spacing:0.000px;">13</div>
<div class="t" style="left:1708.75px;top:194.95px;font-size:14px;color:#424242;letter-spacing:0.000px;">56.5</div>
<div class="t" style="left:1905.93px;top:194.95px;font-size:14px;color:#424242;letter-spacing:0.000px;">84</div>
<div class="t" style="left:1237.00px;top:223.95px;font-size:14px;color:#424242;">3</div>
<div class="t" style="left:1261.50px;top:223.95px;font-size:14px;color:#424242;letter-spacing:0.285px;">Barbara</div>
<div class="t" style="left:1334.80px;top:223.95px;font-size:14px;color:#424242;">F</div>
<div class="t" style="left:1534.93px;top:223.95px;font-size:14px;color:#424242;letter-spacing:0.000px;">13</div>
<div class="t" style="left:1708.75px;top:223.95px;font-size:14px;color:#424242;letter-spacing:0.000px;">65.3</div>
<div class="t" style="left:1905.93px;top:223.95px;font-size:14px;color:#424242;letter-spacing:0.000px;">98</div>
<div class="t" style="left:1237.00px;top:252.95px;font-size:14px;color:#424242;">4</div>
<div class="t" style="left:1261.50px;top:252.95px;font-size:14px;color:#424242;letter-spacing:0.182px;">Carol</div>
<div class="t" style="left:1334.80px;top:252.95px;font-size:14px;color:#424242;">F</div>
<div class="t" style="left:1534.93px;top:252.95px;font-size:14px;color:#424242;letter-spacing:0.000px;">14</div>
<div class="t" style="left:1708.75px;top:252.95px;font-size:14px;color:#424242;letter-spacing:0.000px;">62.8</div>
<div class="t" style="left:1886.47px;top:252.95px;font-size:14px;color:#424242;letter-spacing:0.000px;">102.5</div>
<div class="t" style="left:1237.00px;top:281.95px;font-size:14px;color:#424242;">5</div>
<div class="t" style="left:1261.50px;top:281.95px;font-size:14px;color:#424242;letter-spacing:0.235px;">Henry</div>
<div class="t" style="left:1334.80px;top:281.95px;font-size:14px;color:#424242;">M</div>
<div class="t" style="left:1534.93px;top:281.95px;font-size:14px;color:#424242;letter-spacing:0.000px;">14</div>
<div class="t" style="left:1708.75px;top:281.95px;font-size:14px;color:#424242;letter-spacing:0.000px;">63.5</div>
<div class="t" style="left:1886.47px;top:281.95px;font-size:14px;color:#424242;letter-spacing:0.000px;">102.5</div>
<div class="t" style="left:1237.00px;top:310.95px;font-size:14px;color:#424242;">6</div>
<div class="t" style="left:1261.50px;top:310.95px;font-size:14px;color:#424242;letter-spacing:0.374px;">James</div>
<div class="t" style="left:1334.80px;top:310.95px;font-size:14px;color:#424242;">M</div>
<div class="t" style="left:1534.93px;top:310.95px;font-size:14px;color:#424242;letter-spacing:0.000px;">12</div>
<div class="t" style="left:1708.75px;top:310.95px;font-size:14px;color:#424242;letter-spacing:0.000px;">57.3</div>
<div class="t" style="left:1905.93px;top:310.95px;font-size:14px;color:#424242;letter-spacing:0.000px;">83</div>
<div class="t" style="left:1237.00px;top:339.95px;font-size:14px;color:#424242;">7</div>
<div class="t" style="left:1261.50px;top:339.95px;font-size:14px;color:#424242;letter-spacing:0.300px;">Jane</div>
<div class="t" style="left:1334.80px;top:339.95px;font-size:14px;color:#424242;">F</div>
<div class="t" style="left:1534.93px;top:339.95px;font-size:14px;color:#424242;letter-spacing:0.000px;">12</div>
<div class="t" style="left:1708.75px;top:339.95px;font-size:14px;color:#424242;letter-spacing:0.000px;">59.8</div>
<div class="t" style="left:1894.25px;top:339.95px;font-size:14px;color:#424242;letter-spacing:0.000px;">84.5</div>
<div class="t" style="left:1237.00px;top:368.95px;font-size:14px;color:#424242;">8</div>
<div class="t" style="left:1261.50px;top:368.95px;font-size:14px;color:#424242;letter-spacing:0.278px;">Janet</div>
<div class="t" style="left:1334.80px;top:368.95px;font-size:14px;color:#424242;">F</div>
<div class="t" style="left:1534.93px;top:368.95px;font-size:14px;color:#424242;letter-spacing:0.000px;">15</div>
<div class="t" style="left:1708.75px;top:368.95px;font-size:14px;color:#424242;letter-spacing:0.000px;">62.5</div>
<div class="t" style="left:1887.51px;top:368.95px;font-size:14px;color:#424242;letter-spacing:0.000px;">112.5</div>
<div class="t" style="left:1237.00px;top:397.95px;font-size:14px;color:#424242;">9</div>
<div class="t" style="left:1261.50px;top:397.95px;font-size:14px;color:#424242;letter-spacing:0.255px;">Jeffrey</div>
<div class="t" style="left:1334.80px;top:397.95px;font-size:14px;color:#424242;">M</div>
<div class="t" style="left:1534.93px;top:397.95px;font-size:14px;color:#424242;letter-spacing:0.000px;">13</div>
<div class="t" style="left:1708.75px;top:397.95px;font-size:14px;color:#424242;letter-spacing:0.000px;">62.5</div>
<div class="t" style="left:1905.93px;top:397.95px;font-size:14px;color:#424242;letter-spacing:0.000px;">84</div>
<div class="t" style="left:1237.00px;top:426.95px;font-size:14px;color:#424242;letter-spacing:0.000px;">10</div>
<div class="t" style="left:1261.50px;top:426.95px;font-size:14px;color:#424242;letter-spacing:0.300px;">John</div>
<div class="t" style="left:1334.80px;top:426.95px;font-size:14px;color:#424242;">M</div>
<div class="t" style="left:1534.93px;top:426.95px;font-size:14px;color:#424242;letter-spacing:0.000px;">12</div>
<div class="t" style="left:1720.43px;top:426.95px;font-size:14px;color:#424242;letter-spacing:0.000px;">59</div>
<div class="t" style="left:1894.25px;top:426.95px;font-size:14px;color:#424242;letter-spacing:0.000px;">99.5</div>
<div class="t" style="left:1237.00px;top:455.95px;font-size:14px;color:#424242;letter-spacing:0.000px;">11</div>
<div class="t" style="left:1261.50px;top:455.95px;font-size:14px;color:#424242;letter-spacing:0.310px;">Joyce</div>
<div class="t" style="left:1334.80px;top:455.95px;font-size:14px;color:#424242;">F</div>
<div class="t" style="left:1535.97px;top:455.95px;font-size:14px;color:#424242;letter-spacing:0.000px;">11</div>
<div class="t" style="left:1708.75px;top:455.95px;font-size:14px;color:#424242;letter-spacing:0.000px;">51.3</div>
<div class="t" style="left:1894.25px;top:455.95px;font-size:14px;color:#424242;letter-spacing:0.000px;">50.5</div>
<div class="t" style="left:1237.00px;top:484.95px;font-size:14px;color:#424242;letter-spacing:0.000px;">12</div>
<div class="t" style="left:1261.50px;top:484.95px;font-size:14px;color:#424242;letter-spacing:0.285px;">Judy</div>
<div class="t" style="left:1334.80px;top:484.95px;font-size:14px;color:#424242;">F</div>
<div class="t" style="left:1534.93px;top:484.95px;font-size:14px;color:#424242;letter-spacing:0.000px;">14</div>
<div class="t" style="left:1708.75px;top:484.95px;font-size:14px;color:#424242;letter-spacing:0.000px;">64.3</div>
<div class="t" style="left:1905.93px;top:484.95px;font-size:14px;color:#424242;letter-spacing:0.000px;">90</div>
<div class="t" style="left:1237.00px;top:513.95px;font-size:14px;color:#424242;letter-spacing:0.000px;">13</div>
<div class="t" style="left:1261.50px;top:513.95px;font-size:14px;color:#424242;letter-spacing:0.283px;">Louise</div>
<div class="t" style="left:1334.80px;top:513.95px;font-size:14px;color:#424242;">F</div>
<div class="t" style="left:1534.93px;top:513.95px;font-size:14px;color:#424242;letter-spacing:0.000px;">12</div>
<div class="t" style="left:1708.75px;top:513.95px;font-size:14px;color:#424242;letter-spacing:0.000px;">56.3</div>
<div class="t" style="left:1905.93px;top:513.95px;font-size:14px;color:#424242;letter-spacing:0.000px;">77</div>
<div class="t" style="left:1237.00px;top:542.95px;font-size:14px;color:#424242;letter-spacing:0.000px;">14</div>
<div class="t" style="left:1261.50px;top:542.95px;font-size:14px;color:#424242;letter-spacing:0.143px;">Mary</div>
<div class="t" style="left:1334.80px;top:542.95px;font-size:14px;color:#424242;">F</div>
<div class="t" style="left:1534.93px;top:542.95px;font-size:14px;color:#424242;letter-spacing:0.000px;">15</div>
<div class="t" style="left:1708.75px;top:542.95px;font-size:14px;color:#424242;letter-spacing:0.000px;">66.5</div>
<div class="t" style="left:1899.18px;top:542.95px;font-size:14px;color:#424242;letter-spacing:0.000px;">112</div>
<div class="t" style="left:1237.00px;top:571.95px;font-size:14px;color:#424242;letter-spacing:0.000px;">15</div>
<div class="t" style="left:1261.50px;top:571.95px;font-size:14px;color:#424242;letter-spacing:0.171px;">Philip</div>
<div class="t" style="left:1334.80px;top:571.95px;font-size:14px;color:#424242;">M</div>
<div class="t" style="left:1534.93px;top:571.95px;font-size:14px;color:#424242;letter-spacing:0.000px;">16</div>
<div class="t" style="left:1720.43px;top:571.95px;font-size:14px;color:#424242;letter-spacing:0.000px;">72</div>
<div class="t" style="left:1898.14px;top:571.95px;font-size:14px;color:#424242;letter-spacing:0.000px;">150</div>
<div class="t" style="left:1237.00px;top:600.95px;font-size:14px;color:#424242;letter-spacing:0.000px;">16</div>
<div class="t" style="left:1261.50px;top:600.95px;font-size:14px;color:#424242;letter-spacing:0.240px;">Robert</div>
<div class="t" style="left:1334.80px;top:600.95px;font-size:14px;color:#424242;">M</div>
<div class="t" style="left:1534.93px;top:600.95px;font-size:14px;color:#424242;letter-spacing:0.000px;">12</div>
<div class="t" style="left:1708.75px;top:600.95px;font-size:14px;color:#424242;letter-spacing:0.000px;">64.8</div>
<div class="t" style="left:1898.14px;top:600.95px;font-size:14px;color:#424242;letter-spacing:0.000px;">128</div>
<div class="t" style="left:1237.00px;top:629.95px;font-size:14px;color:#424242;letter-spacing:0.000px;">17</div>
<div class="t" style="left:1261.50px;top:629.95px;font-size:14px;color:#424242;letter-spacing:0.266px;">Ronald</div>
<div class="t" style="left:1334.80px;top:629.95px;font-size:14px;color:#424242;">M</div>
<div class="t" style="left:1534.93px;top:629.95px;font-size:14px;color:#424242;letter-spacing:0.000px;">15</div>
<div class="t" style="left:1720.43px;top:629.95px;font-size:14px;color:#424242;letter-spacing:0.000px;">67</div>
<div class="t" style="left:1898.14px;top:629.95px;font-size:14px;color:#424242;letter-spacing:0.000px;">133</div>
<div class="t" style="left:1237.00px;top:658.95px;font-size:14px;color:#424242;letter-spacing:0.000px;">18</div>
<div class="t" style="left:1261.50px;top:658.95px;font-size:14px;color:#424242;letter-spacing:0.368px;">Thomas</div>
<div class="t" style="left:1334.80px;top:658.95px;font-size:14px;color:#424242;">M</div>
<div class="t" style="left:1535.97px;top:658.95px;font-size:14px;color:#424242;letter-spacing:0.000px;">11</div>
<div class="t" style="left:1708.75px;top:658.95px;font-size:14px;color:#424242;letter-spacing:0.000px;">57.5</div>
<div class="t" style="left:1905.93px;top:658.95px;font-size:14px;color:#424242;letter-spacing:0.000px;">85</div>
<div class="t" style="left:1237.00px;top:687.95px;font-size:14px;color:#424242;letter-spacing:0.000px;">19</div>
<div class="t" style="left:1261.50px;top:687.95px;font-size:14px;color:#424242;letter-spacing:0.171px;">William</div>
<div class="t" style="left:1334.80px;top:687.95px;font-size:14px;color:#424242;">M</div>
<div class="t" style="left:1534.93px;top:687.95px;font-size:14px;color:#424242;letter-spacing:0.000px;">15</div>
<div class="t" style="left:1708.75px;top:687.95px;font-size:14px;color:#424242;letter-spacing:0.000px;">66.5</div>
<div class="t" style="left:1899.18px;top:687.95px;font-size:14px;color:#424242;letter-spacing:0.000px;">112</div>
<svg class="b" style="left:2315.5px;top:895.5px" width="16" height="16" viewBox="0 0 16 16"><circle cx="8" cy="8" r="7" fill="none" stroke="#1a72b8" stroke-width="1.4"/><circle cx="8" cy="4.6" r="1" fill="#1a72b8"/><rect x="7.1" y="6.6" width="1.8" height="5.2" fill="#1a72b8"/></svg>
<div class="t" style="left:2336.40px;top:894.90px;font-size:13px;color:#424242;letter-spacing:-0.334px;">Mensajes</div>
<div class="t" style="left:2420.80px;top:894.90px;font-size:13px;color:#424242;letter-spacing:-0.070px;">Usuario: u64309813</div></body></html>
